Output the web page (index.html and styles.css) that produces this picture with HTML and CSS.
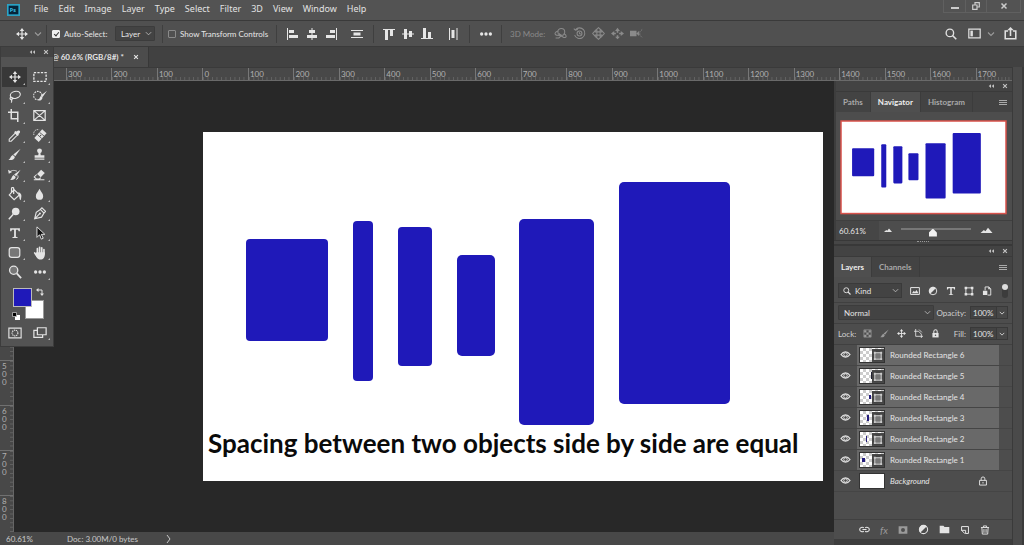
FILE: index.html
```html
<!DOCTYPE html>
<html lang="en">
<head>
<meta charset="utf-8">
<title>Photo editor</title>
<link rel="stylesheet" href="styles.css">
</head>
<body>
<svg class="defs" aria-hidden="true">
  <symbol id="move" viewBox="0 0 16 16"><path d="M8 2v12M2 8h12" stroke="currentColor" stroke-width="1.6"/><path d="M8 0l3 4H5zM8 16l3-4H5zM0 8l4-3v6zM16 8l-4-3v6z" fill="currentColor"/></symbol>
  <symbol id="chev" viewBox="0 0 8 8"><path d="M1 2.5l3 3 3-3" fill="none" stroke="currentColor" stroke-width="1.1"/></symbol>
  <symbol id="close" viewBox="0 0 8 8"><path d="M1.5 1.5l5 5M6.500 1.500l-5 5" stroke="currentColor" stroke-width="1.5"/></symbol>
  <symbol id="collapse" viewBox="0 0 8 8"><path d="M4 1.500v5L1 4zM8 1.500v5L5 4z" fill="currentColor"/></symbol>
  <symbol id="menu" viewBox="0 0 8 8"><path d="M0 1.500h8M0 3.500h8M0 5.500h8" stroke="currentColor"/></symbol>
  <symbol id="al-left" viewBox="0 0 12 12"><path d="M0 0h1v12H0zM2 2h5v3H2zM2 7h9v3H2z" fill="currentColor"/></symbol>
  <symbol id="al-center" viewBox="0 0 12 12"><path d="M5.500 0h1v12h-1zM3 2h6v3H3zM1 7h10v3H1z" fill="currentColor"/></symbol>
  <symbol id="al-right" viewBox="0 0 12 12"><path d="M11 0h1v12h-1zM5 2h5v3H5zM1 7h9v3H1z" fill="currentColor"/></symbol>
  <symbol id="dist-v" viewBox="0 0 12 12"><path d="M0 2h12v1H0zM2.500 4.500h7v3h-7zM0 9h12v1H0z" fill="currentColor"/></symbol>
  <symbol id="al-top" viewBox="0 0 12 12"><path d="M0 1h12v1H0zM2 2h3v10H2zM7 2h3v6H7z" fill="currentColor"/></symbol>
  <symbol id="al-mid" viewBox="0 0 12 12"><path d="M0 5.500h12v1H0zM2 1h3v10H2zM7 3h3v6H7z" fill="currentColor"/></symbol>
  <symbol id="al-bot" viewBox="0 0 12 12"><path d="M0 10h12v1H0zM2 0h3v10H2zM7 4h3v6H7z" fill="currentColor"/></symbol>
  <symbol id="dist-h" viewBox="0 0 12 12"><path d="M2 0h1v12H2zM4.500 2h3v8h-3zM9.500 0h1v12h-1z" fill="currentColor"/></symbol>
  <symbol id="dots" viewBox="0 0 16 16"><g fill="currentColor"><circle cx="3" cy="8" r="1.9"/><circle cx="8" cy="8" r="1.900"/><circle cx="13" cy="8" r="1.900"/></g></symbol>
  <symbol id="orbit" viewBox="0 0 16 16"><g fill="none" stroke="currentColor" stroke-width="1.3"><circle cx="9" cy="6" r="4.200"/><path d="M5 5C1 6 0 9 3 10l5 .5M6 8l3 2.500-3 3H2M12 8c4 2 4 5 0 5l-3-2"/></g></symbol>
  <symbol id="roll" viewBox="0 0 16 16"><g fill="none" stroke="currentColor" stroke-width="1.300"><circle cx="8" cy="8" r="3"/><path d="M3 3.500a6.500 6.500 0 1 1-1 6.500M1 2l2 2 3-1M8 6.500V8l1.500 1"/></g></symbol>
  <symbol id="pan" viewBox="0 0 16 16"><g fill="none" stroke="currentColor" stroke-width="1.300"><path d="M6 6V4H4.500L8 .8 11.500 4H10v2h2V4.500L15.200 8 12 11.500V10h-2v2h1.500L8 15.200 4.500 12H6v-2H4v1.500L.8 8 4 4.500V6zM6 6h4v4H6z"/></g></symbol>
  <symbol id="slide" viewBox="0 0 16 16"><path d="M8 1l3 4H9v2H7V5H5zM0 8l4-3v2h2v2H4v2zM16 8l-4-3v2h-2v2h2v2zM8 15l-3-3h2v-2h2v2h2z" fill="currentColor"/></symbol>
  <symbol id="camera3d" viewBox="0 0 16 16"><path d="M0 4.500h8v7H0zM8 8l3-3v6z" fill="currentColor"/><path d="M15 3l-3 3v4l3 3" fill="none" stroke="currentColor" stroke-dasharray="2 1"/></symbol>
  <symbol id="search" viewBox="0 0 16 16"><circle cx="6.500" cy="6.500" r="5" fill="none" stroke="currentColor" stroke-width="1.800"/><path d="M10 10l5 5" stroke="currentColor" stroke-width="2.200"/></symbol>
  <symbol id="workspace" viewBox="0 0 16 16"><path d="M1 2.500h14v11H1z" fill="none" stroke="currentColor" stroke-width="1.500"/><path d="M3 4.500h3v7H3z" fill="currentColor"/></symbol>
  <symbol id="share" viewBox="0 0 16 16"><path d="M5 5H1.500v9.500h13V5H11M8 11V2" fill="none" stroke="currentColor" stroke-width="1.900"/><path d="M8 0l4 4H4z" fill="currentColor"/></symbol>
  <symbol id="marquee" viewBox="0 0 16 16"><path d="M1 3h14v10H1z" fill="none" stroke="currentColor" stroke-width="1.500" stroke-dasharray="2.600 1.400"/></symbol>
  <symbol id="lasso" viewBox="0 0 16 16"><g fill="none" stroke="currentColor" stroke-width="1.400"><ellipse cx="9" cy="6" rx="6.200" ry="4.300" transform="rotate(-14 9 6)"/><circle cx="4" cy="10.500" r="1.500"/><path d="M4 12c1 1 1 2 0 3.500"/></g></symbol>
  <symbol id="quick" viewBox="0 0 16 16"><circle cx="5.500" cy="7.500" r="4.800" fill="none" stroke="currentColor" stroke-width="1.200" stroke-dasharray="2 1"/><path d="M16 2l-5 7-2-1.500zM9 8l2 2c-1 3-3 3.500-5 3 1.500-1 1.500-4 3-5z" fill="currentColor"/></symbol>
  <symbol id="crop" viewBox="0 0 16 16"><path d="M4 0v12h9M0 4h12v12" fill="none" stroke="currentColor" stroke-width="1.800"/></symbol>
  <symbol id="frame" viewBox="0 0 16 16"><path d="M1 2h14v12H1zM1 2l14 12M15 2L1 14" fill="none" stroke="currentColor" stroke-width="1.500"/></symbol>
  <symbol id="dropper" viewBox="0 0 16 16"><path d="M9 5l2.500 2.500L4 15H1.500v-2.500z" fill="none" stroke="currentColor" stroke-width="1.300"/><path d="M7.500 4L12 8.500l1.500-1.500-.7-.7C17 4 14 -.5 10.500 3.200L9 2.500z" fill="currentColor"/></symbol>
  <symbol id="heal" viewBox="0 0 16 16"><path d="M1.500 11.500l9-10 5 4.500-9 10z" fill="currentColor"/><path d="M5 7.500l5 4.500M7.500 5l5 4" stroke="#535353"/><circle cx="8.700" cy="8.500" r=".8" fill="#535353"/><path d="M1 8c-1-4 2-7 6-6" fill="none" stroke="currentColor" stroke-dasharray="1.500 1"/></symbol>
  <symbol id="brush" viewBox="0 0 16 16"><path d="M15.500 1L9 10 6.500 8zM6 8.500L8.500 11c-1 4-5 4-8 3.500C3.500 13 3 9.500 6 8.500z" fill="currentColor"/></symbol>
  <symbol id="stamp" viewBox="0 0 16 16"><circle cx="8" cy="3.500" r="3" fill="currentColor"/><path d="M7 5h2l.5 4H14v3H2V9h4.500zM2 13h12v1.500H2z" fill="currentColor"/></symbol>
  <symbol id="history" viewBox="0 0 16 16"><path d="M15.500 2L10 10 7.500 8zM7 8.500L9.500 11c-1 3.500-4 4-7 3.500 2.500-1.500 2-5 4.500-6zM0 2l1 5 4-2z" fill="currentColor"/><path d="M2 5c3-3 7-2 9-1M12 9c1 2 0 5-2 5" fill="none" stroke="currentColor" stroke-width="1.100"/></symbol>
  <symbol id="eraser" viewBox="0 0 16 16"><path d="M10 2l4.500 4-5 5.500-4.500-4z" fill="currentColor"/><path d="M4.500 8L1.500 11 4 13.500h4l1.500-1.700M1 14.500h13" fill="none" stroke="currentColor" stroke-width="1.300"/></symbol>
  <symbol id="bucket" viewBox="0 0 16 16"><path d="M7 3l6 6-6 5.500L1.500 9zM6.500 8V2c0-2-2.500-2-2.500 0v4" fill="none" stroke="currentColor" stroke-width="1.400"/><path d="M11.500 6c5 1 4 5 3 9-2-1-1-4-3-9z" fill="currentColor"/></symbol>
  <symbol id="drop" viewBox="0 0 16 16"><path d="M8 1c2 4 4.500 6 4.500 9a4.500 4.500 0 0 1-9 0C3.500 7 6 5 8 1z" fill="currentColor"/></symbol>
  <symbol id="dodge" viewBox="0 0 16 16"><circle cx="9.500" cy="5.500" r="4.700" fill="currentColor"/><path d="M6.500 9L1 15" stroke="currentColor" stroke-width="1.800"/></symbol>
  <symbol id="pen" viewBox="0 0 16 16"><path d="M2 14.500l2-8L9 3l4.500 4.500-3 5zM2 14.500L8 8.500M9 3l2-2 4.500 4.500-2 2" fill="none" stroke="currentColor" stroke-width="1.400"/><circle cx="8.500" cy="8" r="1.300" fill="currentColor"/></symbol>
  <symbol id="type" viewBox="0 0 16 16"><path d="M1.500 1.500h13v4h-1.500L12 3.500H9.200V13l2.300.5v1h-7v-1l2.300-.5V3.500H4L3 5.500H1.500z" fill="currentColor"/></symbol>
  <symbol id="arrow" viewBox="0 0 16 16"><path d="M4.500 1v12l3-3 2 5 2.200-1-2.200-4.500h4z" fill="#111" stroke="currentColor" stroke-width="1.100"/></symbol>
  <symbol id="rrect" viewBox="0 0 16 16"><rect x="1.500" y="2" width="13" height="12" rx="3" fill="#777" stroke="currentColor" stroke-width="1.500"/></symbol>
  <symbol id="hand" viewBox="0 0 16 16"><path d="M5 8V3M7.500 8V1.500M10 8V2M12.500 9V4M2 8l3 4" fill="none" stroke="currentColor" stroke-width="1.900" stroke-linecap="round"/><path d="M4 7h9.500c.5 5-1 8.500-5 8.500S4 12 2 9z" fill="currentColor"/></symbol>
  <symbol id="zoomt" viewBox="0 0 16 16"><circle cx="6.500" cy="6" r="4.700" fill="#777" stroke="currentColor" stroke-width="1.500"/><path d="M10 9.500l5 5.500" stroke="currentColor" stroke-width="2"/></symbol>
  <symbol id="swap" viewBox="0 0 8 8"><path d="M1.500 2h4.500v4.500" fill="none" stroke="currentColor"/><path d="M0 2l2.500-2v4zM6 8L4 5.500h4z" fill="currentColor"/></symbol>
  <symbol id="default" viewBox="0 0 8 8"><path d="M3 3h5v5H3z" fill="#fff"/><path d="M.5 .5h4v4h-4z" fill="#000" stroke="#bbb" stroke-width=".8"/></symbol>
  <symbol id="mask" viewBox="0 0 16 16"><path d="M1 2.500h14v11H1z" fill="none" stroke="currentColor" stroke-width="1.300"/><circle cx="8" cy="8" r="3.300" fill="none" stroke="currentColor" stroke-width="1.300" stroke-dasharray="1.500 .8"/></symbol>
  <symbol id="screens" viewBox="0 0 16 16"><path d="M5 2h10v8H5z M5 5H1v8h10v-3" fill="none" stroke="currentColor" stroke-width="1.400"/></symbol>
  <symbol id="mount" viewBox="0 0 16 8"><path d="M0 8l4.500-4 2 1.500L10 1l6 7z" fill="currentColor"/></symbol>
  <symbol id="picture" viewBox="0 0 16 16"><path d="M1 2.500h14v11H1z" fill="none" stroke="currentColor" stroke-width="1.600"/><path d="M3 11.500l3-4 2 2 2.500-3 3 5z" fill="currentColor"/></symbol>
  <symbol id="adjust" viewBox="0 0 16 16"><circle cx="8" cy="8" r="6" fill="none" stroke="currentColor" stroke-width="1.500"/><path d="M12.500 3.500A6 6 0 0 0 3.500 12.500z" fill="currentColor"/></symbol>
  <symbol id="shape" viewBox="0 0 16 16"><path d="M3 3h10v10H3z" fill="none" stroke="currentColor" stroke-width="1.500"/><path d="M1 1h4v4H1zM11 1h4v4h-4zM1 11h4v4H1zM11 11h4v4h-4z" fill="currentColor"/></symbol>
  <symbol id="smart" viewBox="0 0 16 16"><path d="M5 7V1.500h6l3 3v10H9" fill="none" stroke="currentColor" stroke-width="1.500"/><path d="M1.500 7.500h7v7h-7zM10 1v4h4z" fill="currentColor"/></symbol>
  <symbol id="checker" viewBox="0 0 16 16"><path d="M1.500 1.500h13v13h-13z" fill="none" stroke="currentColor" stroke-width="1.200"/><path d="M2 2h4v4H2zM10 2h4v4h-4zM6 6h4v4H6zM2 10h4v4H2zM10 10h4v4h-4z" fill="currentColor"/></symbol>
  <symbol id="artb" viewBox="0 0 16 16"><path d="M3 0v13h13M0 4h8l5 5v7M9 1l5 5" fill="none" stroke="currentColor" stroke-width="1.500"/></symbol>
  <symbol id="lock" viewBox="0 0 16 16"><path d="M5 7V4.500a3 3 0 0 1 6 0V7" fill="none" stroke="currentColor" stroke-width="1.800"/><path d="M2.500 7h11v8h-11z" fill="currentColor"/><circle cx="8" cy="11" r="1.300" fill="#4d4d4d"/></symbol>
  <symbol id="lock-o" viewBox="0 0 16 16"><path d="M5 7V4.500a3 3 0 0 1 6 0V7M2.500 7h11v7.500h-11zM8 9.500V12" fill="none" stroke="currentColor" stroke-width="1.500"/></symbol>
  <symbol id="eye" viewBox="0 0 16 16"><path d="M1.500 8C5 3 11 3 14.500 8 11 13 5 13 1.500 8z" fill="none" stroke="currentColor" stroke-width="1.900"/><circle cx="8" cy="8" r="2.600" fill="none" stroke="currentColor" stroke-width="1.400"/></symbol>
  <symbol id="link" viewBox="0 0 16 16"><path d="M7 5.500C5 4 1 5 1 8s4 4 6 2.500M9 5.500c2-1.500 6-.5 6 2.500s-4 4-6 2.500M5 8h6" fill="none" stroke="currentColor" stroke-width="1.600"/></symbol>
  <symbol id="addmask" viewBox="0 0 16 16"><path d="M1 2h14v12H1z" fill="currentColor"/><circle cx="8" cy="8" r="3.200" fill="#4d4d4d"/></symbol>
  <symbol id="folder" viewBox="0 0 16 16"><path d="M1 2.500h5.500l1.500 2h7v9H1z" fill="currentColor"/></symbol>
  <symbol id="newl" viewBox="0 0 16 16"><path d="M2.500 9V2.500h11v11H9M9 14V8.500H2.500L8 14" fill="none" stroke="currentColor" stroke-width="1.600"/></symbol>
  <symbol id="trash" viewBox="0 0 16 16"><path d="M1.500 4h13M5.500 3.500V1.500h5v2M3 4.500l.7 10h8.600l.7-10M6.300 6.500v6M9.700 6.500v6" fill="none" stroke="currentColor" stroke-width="1.500"/></symbol>
  <symbol id="thumb-mask" viewBox="0 0 13 14"><path d="M0 0h13v14H0z" fill="#444"/><path d="M3 4h7v7H3z" fill="#777" stroke="#ddd"/><path d="M2 3h2v2H2zM9 3h2v2H9zM2 10h2v2H2zM9 10h2v2H9z" fill="#ccc"/></symbol>
</svg>

<header class="menubar">
  <svg class="logo" viewBox="0 0 12 11" aria-hidden="true"><rect x=".75" y=".75" width="10.500" height="9.500" fill="#06243a" stroke="#2aa5c8" stroke-width="1.500"/><text x="2.600" y="7.800" class="logo-text">Ps</text></svg>
  <nav class="menus">
    <button>File</button><button>Edit</button><button>Image</button><button>Layer</button><button>Type</button><button>Select</button><button>Filter</button><button>3D</button><button>View</button><button>Window</button><button>Help</button>
  </nav>
  <div class="window-buttons">
    <button aria-label="Minimize"><svg viewBox="0 0 8 8"><path d="M0 5h8v2H0z" fill="currentColor"/></svg></button>
    <button aria-label="Restore"><svg viewBox="0 0 8 8"><path d="M3 3V.7h4.300v4.300H5M.7 3H5v4.300H.7z" fill="none" stroke="currentColor" stroke-width="1.200"/></svg></button>
    <button aria-label="Close"><svg><use href="#close"/></svg></button>
  </div>
</header>

<div class="options">
  <div class="group g-tool"><button aria-label="Move tool"><svg class="i12"><use href="#move"/></svg></button><button aria-label="Tool presets"><svg class="i8 dim"><use href="#chev"/></svg></button></div>
  <div class="group g-auto">
    <label class="check"><input type="checkbox" checked><span>Auto-Select:</span></label>
    <select aria-label="Auto-select target" class="pick pick-layer"><option>Layer</option></select>
  </div>
  <div class="group g-show"><label class="check"><input type="checkbox"><span>Show Transform Controls</span></label></div>
  <div class="group g-align">
    <button aria-label="Align left edges"><svg class="i12"><use href="#al-left"/></svg></button>
    <button aria-label="Align horizontal centers"><svg class="i12"><use href="#al-center"/></svg></button>
    <button aria-label="Align right edges"><svg class="i12"><use href="#al-right"/></svg></button>
    <button aria-label="Distribute vertically" class="apart"><svg class="i12"><use href="#dist-v"/></svg></button>
  </div>
  <div class="group g-align2">
    <button aria-label="Align top edges"><svg class="i12"><use href="#al-top"/></svg></button>
    <button aria-label="Align vertical centers"><svg class="i12"><use href="#al-mid"/></svg></button>
    <button aria-label="Align bottom edges"><svg class="i12"><use href="#al-bot"/></svg></button>
    <button aria-label="Distribute horizontally" class="apart"><svg class="i12"><use href="#dist-h"/></svg></button>
  </div>
  <div class="group g-more"><button aria-label="More options"><svg class="i14"><use href="#dots"/></svg></button></div>
  <div class="mode3d"><span>3D Mode:</span>
    <button aria-label="Orbit"><svg class="i13"><use href="#orbit"/></svg></button>
    <button aria-label="Roll"><svg class="i13"><use href="#roll"/></svg></button>
    <button aria-label="Pan"><svg class="i13"><use href="#pan"/></svg></button>
    <button aria-label="Slide"><svg class="i13"><use href="#slide"/></svg></button>
    <button aria-label="Zoom camera"><svg class="i13"><use href="#camera3d"/></svg></button>
  </div>
  <div class="right-tools">
    <button aria-label="Search"><svg class="i12"><use href="#search"/></svg></button>
    <button aria-label="Workspace"><svg class="i13"><use href="#workspace"/></svg></button>
    <button aria-label="Choose workspace" class="snug"><svg class="i8 dim"><use href="#chev"/></svg></button>
    <button aria-label="Share"><svg class="i13"><use href="#share"/></svg></button>
  </div>
</div>

<div class="tabbar"><div class="doc-tab"><span>@ 60.6% (RGB/8#) *</span><button aria-label="Close document"><svg class="i6"><use href="#close"/></svg></button></div></div>

<main class="work">
  <div class="hruler">
    <span>300</span><span>200</span><span>100</span><span>0</span><span>100</span><span>200</span><span>300</span><span>400</span><span>500</span><span>600</span><span>700</span><span>800</span><span>900</span><span>1000</span><span>1100</span><span>1200</span><span>1300</span><span>1400</span><span>1500</span><span>1600</span><span>1700</span>
  </div>
  <div class="vruler">
    <span>100</span><span>0</span><span>100</span><span>200</span><span>300</span><span>400</span><span>500</span><span>600</span><span>700</span><span>800</span>
  </div>
  <section class="canvas">
    <svg class="artboard" viewBox="0 0 620 349" preserveAspectRatio="xMidYMin meet">
      <rect width="620" height="349" fill="#fff"/>
      <g class="bar">
        <rect x="43" y="107" width="82" height="102" rx="4"/>
        <rect x="150" y="89" width="20" height="160" rx="4"/>
        <rect x="195" y="95" width="34" height="139" rx="4"/>
        <rect x="254" y="123" width="38" height="101" rx="5"/>
        <rect x="316" y="87" width="75" height="206" rx="5"/>
        <rect x="416" y="50" width="111" height="222" rx="5"/>
      </g>
      <text x="5" y="321" class="caption">Spacing between two objects side by side are equal</text>
    </svg>
  </section>
  <footer class="status"><span class="zoom-value">60.61%</span><span class="doc-size">Doc: 3.00M/0 bytes</span><button aria-label="Status options"><svg viewBox="0 0 8 8" class="i8"><path d="M2 0l3 4-3 4" fill="none" stroke="currentColor"/></svg></button></footer>

  <aside class="dock">
    <section class="panel nav-panel">
      <div class="grab"><svg class="i6"><use href="#collapse"/></svg><svg class="i6"><use href="#close"/></svg></div>
      <div class="tabs"><button>Paths</button><button class="on">Navigator</button><button>Histogram</button><svg class="i8 burger"><use href="#menu"/></svg></div>
      <div class="preview">
        <svg viewBox="0 0 166 94"><rect x="1" y="1" width="164" height="92" fill="#fff" stroke="#d9534c" stroke-width="1.500"/>
          <g class="bar"><rect x="12" y="28" width="22" height="28" rx="1"/><rect x="41" y="24" width="5" height="43" rx="1"/><rect x="53" y="26" width="9" height="37" rx="1"/><rect x="68" y="33" width="10" height="27" rx="1"/><rect x="85" y="23" width="20" height="55" rx="1"/><rect x="112" y="13" width="28" height="60" rx="1"/></g></svg>
      </div>
      <div class="nav-foot"><span>60.61%</span><div class="nav-slide"><svg class="m-small"><use href="#mount"/></svg><input type="range" aria-label="Zoom" min="0" max="100" value="45"><svg class="m-big"><use href="#mount"/></svg></div></div>
    </section>
    <div class="grip"><i></i></div>
    <section class="panel layers-panel">
      <div class="grab"><svg class="i6"><use href="#collapse"/></svg><svg class="i6"><use href="#close"/></svg></div>
      <div class="tabs"><button class="on">Layers</button><button>Channels</button><svg class="i8 burger"><use href="#menu"/></svg></div>
      <div class="row filter">
        <div class="kind"><svg class="i8"><use href="#search"/></svg><select aria-label="Filter kind" class="pick"><option>Kind</option></select></div>
        <div class="filter-icons">
          <button aria-label="Pixel layers"><svg class="i10"><use href="#picture"/></svg></button><button aria-label="Adjustment layers"><svg class="i10"><use href="#adjust"/></svg></button><button aria-label="Type layers"><svg class="i10"><use href="#type"/></svg></button><button aria-label="Shape layers"><svg class="i10"><use href="#shape"/></svg></button><button aria-label="Smart objects"><svg class="i10"><use href="#smart"/></svg></button>
        </div>
        <button class="toggle" aria-label="Toggle filter"></button>
      </div>
      <div class="row blend">
        <select aria-label="Blend mode" class="pick pick-blend"><option>Normal</option></select>
        <label for="opacity">Opacity:</label><input id="opacity" class="num" value="100%"><button class="drop" aria-label="Opacity slider"><svg class="i6"><use href="#chev"/></svg></button>
      </div>
      <div class="row locks">
        <span class="lock-label">Lock:</span>
        <div class="lock-icons"><button aria-label="Lock transparency"><svg class="i9 dim"><use href="#checker"/></svg></button><button aria-label="Lock pixels"><svg class="i9 dim"><use href="#brush"/></svg></button><button aria-label="Lock position"><svg class="i9"><use href="#move"/></svg></button><button aria-label="Lock artboard"><svg class="i9"><use href="#artb"/></svg></button><button aria-label="Lock all"><svg class="i9"><use href="#lock"/></svg></button></div>
        <label for="fill">Fill:</label><input id="fill" class="num" value="100%"><button class="drop" aria-label="Fill slider"><svg class="i6"><use href="#chev"/></svg></button>
      </div>
      <ul class="layers">
        <li><button class="eye" aria-label="Visibility"><svg class="i11"><use href="#eye"/></svg></button><div class="layer sel"><svg class="thumb" viewBox="0 0 24 14"><rect width="24" height="14" class="chk"/><use href="#thumb-mask" x="12" y="1" width="12" height="13"/></svg><span>Rounded Rectangle 6</span></div></li>
        <li><button class="eye" aria-label="Visibility"><svg class="i11"><use href="#eye"/></svg></button><div class="layer sel"><svg class="thumb" viewBox="0 0 24 14"><rect width="24" height="14" class="chk"/><path d="M11 3h2v7h-2z" fill="#223"/><use href="#thumb-mask" x="12" y="1" width="12" height="13"/></svg><span>Rounded Rectangle 5</span></div></li>
        <li><button class="eye" aria-label="Visibility"><svg class="i11"><use href="#eye"/></svg></button><div class="layer sel"><svg class="thumb" viewBox="0 0 24 14"><rect width="24" height="14" class="chk"/><path d="M9 5h2v4H9z" class="ink"/><use href="#thumb-mask" x="12" y="1" width="12" height="13"/></svg><span>Rounded Rectangle 4</span></div></li>
        <li><button class="eye" aria-label="Visibility"><svg class="i11"><use href="#eye"/></svg></button><div class="layer sel"><svg class="thumb" viewBox="0 0 24 14"><rect width="24" height="14" class="chk"/><path d="M7 4h2v6H7z" class="ink"/><use href="#thumb-mask" x="12" y="1" width="12" height="13"/></svg><span>Rounded Rectangle 3</span></div></li>
        <li><button class="eye" aria-label="Visibility"><svg class="i11"><use href="#eye"/></svg></button><div class="layer sel"><svg class="thumb" viewBox="0 0 24 14"><rect width="24" height="14" class="chk"/><path d="M6 4h1v6H6z" class="ink"/><use href="#thumb-mask" x="12" y="1" width="12" height="13"/></svg><span>Rounded Rectangle 2</span></div></li>
        <li><button class="eye" aria-label="Visibility"><svg class="i11"><use href="#eye"/></svg></button><div class="layer sel"><svg class="thumb" viewBox="0 0 24 14"><rect width="24" height="14" class="chk"/><path d="M2 5h3v4H2z" class="ink"/><use href="#thumb-mask" x="12" y="1" width="12" height="13"/></svg><span>Rounded Rectangle 1</span></div></li>
        <li><button class="eye" aria-label="Visibility"><svg class="i11"><use href="#eye"/></svg></button><div class="layer"><svg class="thumb" viewBox="0 0 24 14"><rect width="24" height="14" fill="#fff"/></svg><em>Background</em><svg class="i10 bg-lock"><use href="#lock-o"/></svg></div></li>
      </ul>
      <div class="layer-foot">
        <button aria-label="Link layers"><svg class="i11"><use href="#link"/></svg></button><button class="fx" aria-label="Layer style">fx</button><button aria-label="Add mask"><svg class="i10 dim"><use href="#addmask"/></svg></button><button aria-label="New adjustment layer" class="more"><svg class="i11"><use href="#adjust"/></svg></button><button aria-label="New group"><svg class="i11"><use href="#folder"/></svg></button><button aria-label="New layer"><svg class="i10"><use href="#newl"/></svg></button><button aria-label="Delete layer"><svg class="i10"><use href="#trash"/></svg></button>
      </div>
    </section>
  </aside>
  <div class="edge"></div>
</main>

<aside class="toolbox">
  <div class="grab"><svg class="i6"><use href="#collapse"/></svg><svg class="i6"><use href="#close"/></svg></div>
  <div class="tools">
    <button class="more on" aria-label="Move"><svg class="i12"><use href="#move"/></svg></button><button class="more" aria-label="Marquee"><svg class="i14"><use href="#marquee"/></svg></button>
    <button class="more" aria-label="Lasso"><svg class="i13"><use href="#lasso"/></svg></button><button class="more" aria-label="Quick selection"><svg class="i14"><use href="#quick"/></svg></button>
    <button class="more" aria-label="Crop"><svg class="i13"><use href="#crop"/></svg></button><button aria-label="Frame"><svg class="i13"><use href="#frame"/></svg></button>
    <button class="more" aria-label="Eyedropper"><svg class="i13"><use href="#dropper"/></svg></button><button class="more" aria-label="Healing brush"><svg class="i14"><use href="#heal"/></svg></button>
    <button class="more" aria-label="Brush"><svg class="i13"><use href="#brush"/></svg></button><button class="more" aria-label="Clone stamp"><svg class="i13"><use href="#stamp"/></svg></button>
    <button class="more" aria-label="History brush"><svg class="i13"><use href="#history"/></svg></button><button class="more" aria-label="Eraser"><svg class="i13"><use href="#eraser"/></svg></button>
    <button class="more" aria-label="Paint bucket"><svg class="i14"><use href="#bucket"/></svg></button><button class="more" aria-label="Blur"><svg class="i13"><use href="#drop"/></svg></button>
    <button class="more" aria-label="Dodge"><svg class="i13"><use href="#dodge"/></svg></button><button class="more" aria-label="Pen"><svg class="i13"><use href="#pen"/></svg></button>
    <button class="more" aria-label="Type"><svg class="i12"><use href="#type"/></svg></button><button class="more" aria-label="Path selection"><svg class="i14"><use href="#arrow"/></svg></button>
    <button class="more" aria-label="Rounded rectangle"><svg class="i13"><use href="#rrect"/></svg></button><button class="more" aria-label="Hand"><svg class="i14"><use href="#hand"/></svg></button>
    <button aria-label="Zoom"><svg class="i14"><use href="#zoomt"/></svg></button><button class="more" aria-label="Edit toolbar"><svg class="i14"><use href="#dots"/></svg></button>
  </div>
  <div class="swatches"><button class="bg" aria-label="Background color"></button><button class="fg" aria-label="Foreground color"></button><svg class="swap i8"><use href="#swap"/></svg><svg class="reset i8"><use href="#default"/></svg></div>
  <div class="modes"><button aria-label="Quick mask"><svg class="i14"><use href="#mask"/></svg></button><button class="more" aria-label="Screen mode"><svg class="i14"><use href="#screens"/></svg></button></div>
</aside>
</body>
</html>
```
FILE: styles.css
```css
* { box-sizing: border-box; }
body {
  margin: 0;
  height: 100vh;
  display: flex;
  flex-direction: column;
  position: relative;
  overflow: hidden;
  background: #4a4a4a;
  color: #e4e4e4;
  font: 8px/10px Lato, "Open Sans", sans-serif;
}
button, input, select { font: inherit; color: inherit; margin: 0; }
button {
  display: flex; align-items: center; justify-content: center;
  padding: 0; border: 0; background: none; position: relative;
}
svg { display: block; flex: none; }
.defs { position: absolute; width: 0; height: 0; }
.i6 { width: 6px; height: 6px; }
.i8 { width: 8px; height: 8px; }
.i9 { width: 9px; height: 9px; }
.i10 { width: 10px; height: 10px; }
.i11 { width: 11px; height: 11px; }
.i12 { width: 12px; height: 12px; }
.i13 { width: 13px; height: 13px; }
.i14 { width: 14px; height: 14px; }
.dim { color: #9a9a9a; }
.bar { fill: #1f19b9; }
.more::after {
  content: ""; position: absolute; right: 2px; bottom: 2px;
  border: 1px solid #bbb; border-top-color: transparent; border-left-color: transparent;
}

/* Menu bar */
.menubar {
  flex: none; height: 21px; display: flex; align-items: center;
  padding-left: 7px; background: #535353; border-bottom: 1px solid #3a3a3a;
  font: 9px/14px "Noto Sans", "Open Sans", sans-serif; color: #e2e2e2;
}
.logo { width: 13px; height: 12px; }
.logo-text { font: bold 5px "Open Sans", sans-serif; fill: #3cc3e8; }
.menus { display: flex; gap: 10px; margin-left: 14px; padding-bottom: 2px; }
.window-buttons {
  margin: 0 3px 0 auto; align-self: flex-start; display: flex; height: 13px;
  border: 1px solid #606060; border-top: 0; color: #ccc;
}
.window-buttons button { width: 21px; }
.window-buttons button:last-child { width: 34px; }
.window-buttons button + button { border-left: 1px solid #606060; }
.window-buttons svg { width: 8px; height: 8px; }

/* Options bar */
.options {
  flex: none; height: 26px; display: flex; align-items: center;
  background: #505050; border-bottom: 1px solid #3a3a3a; padding-left: 2px;
}
.group { display: flex; align-items: center; height: 18px; border-right: 1px solid #3f3f3f; color: #e6e6e6; }
.g-tool { width: 45px; padding-left: 14px; gap: 6px; }
.g-auto { width: 116px; padding-left: 5px; justify-content: space-between; padding-right: 7px; }
.g-show { width: 114px; padding-left: 5px; }
.g-align { width: 97px; padding-left: 10px; gap: 7px; }
.g-align2 { width: 96px; padding-left: 9px; gap: 7px; }
.apart { margin-left: 7px; }
.g-more { width: 32px; padding-left: 9px; }
.check { display: flex; align-items: center; gap: 4px; }
.check input {
  appearance: none; width: 8px; height: 8px; border: 1px solid #8a8a8a; border-radius: 1px;
}
.check input:checked { border-color: #eee; background: #eee; }
.check input:checked::before {
  content: ""; display: block; width: 2px; height: 4px; margin: 0 2px;
  border: solid #333; border-width: 0 1px 1px 0; box-sizing: content-box; rotate: 40deg;
}
.pick {
  appearance: none; border: 1px solid #3c3c3c; border-radius: 1px; padding: 0 12px 0 5px;
  background: #434343 url("data:image/svg+xml,%3Csvg xmlns='http://www.w3.org/2000/svg' viewBox='0 0 8 8'%3E%3Cpath d='M1 2.500l3 3 3-3' fill='none' stroke='%23bbb'/%3E%3C/svg%3E") no-repeat right 2px center / 7px 7px;
}
.pick-layer { width: 40px; height: 15px; }
.mode3d { display: flex; align-items: center; gap: 6px; padding-left: 8px; color: #8a8a8a; }
.mode3d span { width: 38px; }
.right-tools { margin-left: auto; display: flex; align-items: center; gap: 9px; padding-right: 7px; color: #e0e0e0; }
.right-tools > :first-child { margin-right: 2px; }
.snug { margin-left: -3px; }

/* Document tabs */
.tabbar { flex: none; height: 20px; background: #414141; display: flex; }
.doc-tab {
  display: flex; align-items: center; justify-content: space-between; width: 149px; padding: 0 9px 0 52px;
  background: #4c4c4c; border-right: 1px solid #383838; font-weight: bold;
}

/* Work area */
.work {
  flex: 1; min-height: 0; display: grid;
  grid-template-columns: 14px 1fr 178px 12px;
  grid-template-rows: 14px 1fr 13px;
  grid-template-areas: "h h h e" "v c d e" "s s d e";
}
.hruler {
  grid-area: h; display: grid; grid-template-columns: repeat(20, 5fr) 4fr;
  padding-left: 66px; background: #484848; border-top: 1px solid #3a3a3a; border-bottom: 1px solid #6a6a6a;
  color: #b0b0b0; overflow: hidden;
}
.hruler span {
  border-left: 1px solid #777; padding-left: 1px; padding-top: 1px; min-width: 0;
  background: linear-gradient(90deg, #646464 1px, transparent 1px) 0 100% / 10% 3px repeat-x;
}
.vruler {
  grid-area: v; padding-top: 9px; background: #484848; border-right: 1px solid #666;
  color: #b0b0b0; overflow: hidden; min-height: 0;
}
.vruler span {
  display: block; height: 45px; padding: 1px 7px 0 2px; word-break: break-all; line-height: 8px;
  border-top: 1px solid #707070;
  background: linear-gradient(#646464 1px, transparent 1px) 100% 0 / 3px 10% repeat-y;
}
.canvas { grid-area: c; background: #282828; padding: 51px 11px 51px 189px; min-width: 0; min-height: 0; display: flex; }
.artboard { width: 100%; height: 100%; flex: 1; min-width: 0; }
.caption { font: bold 26px Lato, sans-serif; fill: #0a0a0a; }
.status { grid-area: s; background: #484848; display: flex; align-items: center; color: #c8c8c8; }
.zoom-value { width: 36px; padding-left: 6px; }
.doc-size { padding-left: 31px; width: 129px; }
.edge { grid-area: e; background: #4a4a4a; border-left: 1px solid #3a3a3a; border-right: 2px solid #3a3a3a; }

/* Floating panels */
.dock { grid-area: d; display: flex; flex-direction: column; background: #3d3d3d; padding-bottom: 6px; min-height: 0; }
.panel { background: #4d4d4d; display: flex; flex-direction: column; margin-left: 2px; }
.grab { flex: none; height: 10px; background: #434343; display: flex; align-items: center; justify-content: flex-end; gap: 8px; padding-right: 4px; color: #c4c4c4; }
.tabs { flex: none; height: 21px; display: flex; background: #434343; border-top: 1px solid #3a3a3a; }
.tabs button { padding: 0 7px; color: #a8a8a8; font-weight: bold; border-right: 1px solid #3c3c3c; }
.tabs .on { background: #4f4f4f; color: #eee; }
.burger { margin: 7px 5px 0 auto; color: #aaa; }
.preview { padding: 8px 5px 5px 4px; }
.preview svg { width: 100%; height: auto; }
.nav-foot { height: 20px; display: flex; border-top: 1px solid #3f3f3f; }
.nav-foot > span { width: 43px; padding: 5px 0 0 3px; background: #464646; }
.nav-slide { flex: 1; display: flex; align-items: center; justify-content: space-between; padding: 0 19px 0 5px; }
.nav-slide input {
  appearance: none; width: 70px; height: 12px; background: linear-gradient(#777, #777) 0 4px / 100% 2px no-repeat;
}
.nav-slide input::-webkit-slider-thumb {
  appearance: none; width: 8px; height: 8px; margin-top: 5px; background: #f0f0f0;
  clip-path: polygon(50% 0, 100% 50%, 100% 100%, 0 100%, 0 50%);
}
.m-small { width: 8px; height: 4px; }
.m-big { width: 13px; height: 6px; }
.grip { flex: none; height: 6px; background: #464646; border-bottom: 2px solid #383838; border-top: 1px solid #383838; display: flex; justify-content: center; }
.grip i { width: 12px; border-top: 1px dotted #999; }
.layers-panel { flex: 1; min-height: 0; margin-left: 0; }
.row { flex: none; display: flex; align-items: center; padding: 0 4px; border-bottom: 1px solid #404040; }
.filter { height: 26px; padding-top: 3px; }
.kind { display: flex; align-items: center; width: 64px; height: 15px; padding-left: 4px; background: #434343; border: 1px solid #3a3a3a; }
.kind .pick { flex: 1; border: 0; padding-left: 4px; height: 13px; }
.filter-icons { flex: 1; display: flex; justify-content: space-between; padding: 0 10px 0 8px; }
.toggle { width: 6px; height: 14px; background: #3c3c3c; border-radius: 3px; }
.toggle::before { content: ""; position: absolute; top: 0; left: 0; width: 6px; height: 6px; border-radius: 3px; background: #ddd; }
.blend { height: 21px; }
.pick-blend { width: 96px; height: 15px; }
.row label { margin-left: auto; color: #d0d0d0; }
.num { width: 27px; height: 13px; margin-left: 4px; padding: 0 2px; border: 1px solid #393939; background: #434343; outline: 0; }
.drop { width: 11px; height: 13px; border: 1px solid #393939; border-left: 0; background: #484848; }
.locks { height: 21px; }
.lock-label { width: 25px; color: #d0d0d0; }
.lock-icons { display: flex; gap: 8px; }
.layers { list-style: none; margin: 0; padding: 0; flex: 1; }
.layers li { display: flex; height: 21px; padding-right: 13px; border-bottom: 1px solid #454545; }
.eye { width: 23px; }
.layer { flex: 1; display: flex; align-items: center; gap: 6px; padding-left: 3px; }
.sel { background: #696969; }
.thumb { width: 24px; height: 14px; outline: 1px solid #333; background: repeating-conic-gradient(#ccc 0 25%, #fff 0 50%) 0 0 / 6px 6px; }
.chk { fill: none; }
.ink { fill: #241d7c; }
.bg-lock { margin: 0 11px 0 auto; }
.layer-foot { flex: none; height: 20px; display: flex; align-items: center; justify-content: space-between; padding: 0 22px 0 25px; border-top: 1px solid #404040; }
.fx { font-size: 10px; font-style: italic; color: #999; }

/* Toolbox */
.toolbox { position: absolute; left: 0; top: 46px; width: 54px; background: #535353; border: 1px solid #3c3c3c; padding-bottom: 4px; }
.tools { display: grid; grid-template-columns: 1fr 1fr; grid-template-rows: repeat(11, 1fr); height: 215px; margin-top: 10px; padding: 0 1px; }
.tools .on { background: #383838; }
.swatches { position: relative; height: 40px; }
.swatches .fg, .swatches .bg, .swap, .reset { position: absolute; }
.swatches .fg { left: 12px; top: 6px; width: 19px; height: 19px; background: #1f19b9; border: 1px solid #bbb; }
.swatches .bg { left: 24px; top: 18px; width: 19px; height: 19px; background: #fff; border: 1px solid #999; }
.swap { left: 35px; top: 6px; }
.reset { left: 11px; top: 30px; }
.modes { display: grid; grid-template-columns: 1fr 1fr; height: 20px; padding: 1px 1px 0; }
```
